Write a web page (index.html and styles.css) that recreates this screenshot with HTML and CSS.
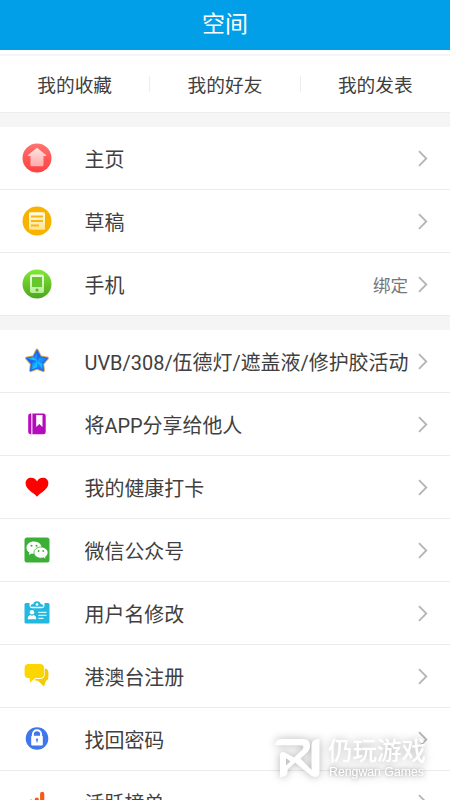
FILE: index.html
```html
<!DOCTYPE html>
<html lang="zh-CN">
<head>
<meta charset="utf-8">
<title>空间</title>
<link rel="stylesheet" href="styles.css">
</head>
<body>
<div class="screen">
  <header class="header">空间</header>
  <nav class="tabs">
    <a class="tab">我的收藏</a>
    <a class="tab">我的好友</a>
    <a class="tab">我的发表</a>
  </nav>
  <section class="group">
    <div class="row">
      <svg class="icon" viewBox="0 0 30 30"><defs><linearGradient id="red" x2="0" y2="1"><stop stop-color="#ff7470"/><stop offset="1" stop-color="#ff3f40"/></linearGradient><linearGradient id="house" x2="0" y2="1"><stop stop-color="#ffe4e2"/><stop offset="1" stop-color="#ffaaa9"/></linearGradient></defs><circle cx="15" cy="15" r="14.5" fill="url(#red)"/><path d="M15 4.7 24.3 12.3Q24.7 13.1 23.8 13.1H21.5V22.2Q21.5 23.2 20.5 23.2H9.5Q8.5 23.2 8.5 22.2V13.1H6.2Q5.3 13.1 5.7 12.3Z" fill="url(#house)"/></svg>
      <span class="label">主页</span><svg class="arrow" viewBox="0 0 10 17"><path d="M1 1.2 8.3 8.5 1 15.8"/></svg>
    </div>
    <div class="row">
      <svg class="icon" viewBox="0 0 30 30"><defs><linearGradient id="paper" x2="0" y2="1"><stop stop-color="#fffbea"/><stop offset="1" stop-color="#ffe58d"/></linearGradient></defs><circle cx="15" cy="15" r="14.5" fill="#f8b300"/><rect x="7" y="6.2" width="16" height="17.5" rx="1.5" fill="url(#paper)"/><path d="M9 10.5H21M9 15H21M9 19.5H17" stroke="#f6b817" stroke-width="2"/></svg>
      <span class="label">草稿</span><svg class="arrow" viewBox="0 0 10 17"><path d="M1 1.2 8.3 8.5 1 15.8"/></svg>
    </div>
    <div class="row">
      <svg class="icon" viewBox="0 0 30 30"><defs><linearGradient id="green" x2="0" y2="1"><stop stop-color="#83e837"/><stop offset="1" stop-color="#4da51f"/></linearGradient><linearGradient id="phone" x2="0" y2="1"><stop stop-color="#edffe0"/><stop offset="1" stop-color="#b5ef8e"/></linearGradient></defs><circle cx="15" cy="15" r="14.5" fill="url(#green)"/><rect x="8" y="5.5" width="14" height="18.5" rx="2" fill="url(#phone)"/><path d="M10 8H20V18H10Z" fill="#65c72c"/><circle cx="15" cy="21" r="1.5" fill="#58b524"/></svg>
      <span class="label">手机</span><span class="value">绑定</span><svg class="arrow" viewBox="0 0 10 17"><path d="M1 1.2 8.3 8.5 1 15.8"/></svg>
    </div>
  </section>
  <section class="group">
    <div class="row">
      <svg class="icon" viewBox="0 0 30 30"><defs><linearGradient id="star" x2="1" y2="1"><stop stop-color="#1b62ed"/><stop offset=".5" stop-color="#199cff"/><stop offset="1" stop-color="#1764ef"/></linearGradient></defs><path d="M15 4.3 18.3 11 25.3 12.2 20.5 17.8 21.3 24.5 15 22.1 8.7 24.5 9.5 17.8 4.7 12.2 11.7 11Z" fill="url(#star)" stroke="#e5b460" stroke-width="3.4" stroke-linejoin="round"/><path d="M15 4.3 18.3 11 25.3 12.2 20.5 17.8 21.3 24.5 15 22.1 8.7 24.5 9.5 17.8 4.7 12.2 11.7 11Z" fill="url(#star)" stroke="#246cf0" stroke-width="1.6" stroke-linejoin="round"/><path d="M15 15 11.7 11 6 12.8ZM15 15 20.5 17.8 20.2 23.5ZM15 15V21.5L9.8 23.3Z" fill="#12cfff" opacity=".75"/><path d="M15 15V5.2L18.3 11ZM15 15 9.5 17.8 6 13Z" fill="#2245e5" opacity=".5"/></svg>
      <span class="label">UVB/308/伍德灯/遮盖液/修护胶活动</span><svg class="arrow" viewBox="0 0 10 17"><path d="M1 1.2 8.3 8.5 1 15.8"/></svg>
    </div>
    <div class="row">
      <svg class="icon" viewBox="0 0 30 30"><path d="M8.2 4.5H9.3V25.2H8.2Q6.2 25 6.2 22.8V7Q6.2 4.7 8.2 4.5ZM10.4 4.5H21.5Q23.7 4.5 23.7 6.7V23Q23.7 25.2 21.5 25.2H10.4Z" fill="#b60bbd"/><path d="M14.2 6H20.5V18L17.3 15 14.2 18Z" fill="#fff"/></svg>
      <span class="label">将APP分享给他人</span><svg class="arrow" viewBox="0 0 10 17"><path d="M1 1.2 8.3 8.5 1 15.8"/></svg>
    </div>
    <div class="row">
      <svg class="icon" viewBox="0 0 30 30"><path d="M15 24.8C12 20.8 3.6 17.8 3.6 11.3 3.6 7.7 6.1 5.7 9.1 5.7 11.8 5.7 14.2 7.3 15 9.5 15.8 7.3 18.2 5.7 20.9 5.7 23.9 5.7 26.4 7.7 26.4 11.3 26.4 17.8 18 20.8 15 24.8Z" fill="#fe0000"/></svg>
      <span class="label">我的健康打卡</span><svg class="arrow" viewBox="0 0 10 17"><path d="M1 1.2 8.3 8.5 1 15.8"/></svg>
    </div>
    <div class="row">
      <svg class="icon" viewBox="0 0 30 30"><rect x="2.5" y="2.5" width="25" height="25" rx="2.5" fill="#3caf36"/><path d="M12 6.5C7.7 6.5 4.5 9.2 4.5 12.7 4.5 14.8 5.7 16.5 7.5 17.6L6.8 20 9.7 18.5Q11 18.9 12.4 18.8C16.5 18.8 19.6 16 19.6 12.7S16.2 6.5 12 6.5Z" fill="#fff"/><path d="M18.8 12C15 12 12 14.5 12 17.6S15 23.2 18.8 23.2Q20.2 23.2 21.4 22.8L24.1 24.1 23.5 21.9C25 20.9 26 19.4 26 17.6 26 14.5 22.7 12 18.8 12Z" fill="#fff" stroke="#3caf36" stroke-width=".8"/><g fill="#3caf36"><circle cx="9.5" cy="10.8" r="1"/><circle cx="14.5" cy="10.8" r="1"/><circle cx="16.6" cy="16" r=".9"/><circle cx="21.2" cy="16" r=".9"/></g></svg>
      <span class="label">微信公众号</span><svg class="arrow" viewBox="0 0 10 17"><path d="M1 1.2 8.3 8.5 1 15.8"/></svg>
    </div>
    <div class="row">
      <svg class="icon" viewBox="0 0 30 30"><path d="M4 5H26Q27.500 5 27.500 6.500V24Q27.500 25.500 26 25.500H4Q2.500 25.500 2.500 24V6.500Q2.500 5 4 5Z" fill="#22b8df"/><path d="M7.500 4.500V7Q7.500 10.200 10.500 10.200H19.500Q22.500 10.200 22.500 7V4.500Z" fill="#fff"/><path d="M8.500 8.700Q8.500 6.200 11.300 5.900 11.900 3.300 15 3.300T18.700 5.900Q21.500 6.200 21.500 8.700Z" fill="#22b8df"/><circle cx="15" cy="6.400" r="1.300" fill="#fff"/><circle cx="10" cy="14.300" r="2.300" fill="#fff"/><path d="M5.800 21.200Q5.600 17.500 8.700 17L10 17.900 11.300 17Q14.400 17.500 14.200 21.200Z" fill="#fff"/><path d="M16.300 14.300H24.500M16.300 17.300H24.500M16.300 20.300H21.500" stroke="#d7f5fc" stroke-width="1.300"/></svg>
      <span class="label">用户名修改</span><svg class="arrow" viewBox="0 0 10 17"><path d="M1 1.2 8.3 8.5 1 15.8"/></svg>
    </div>
    <div class="row">
      <svg class="icon" viewBox="0 0 30 30"><path d="M22.7 7.4Q26.4 7.7 26.4 11.4V15.4Q26.4 19.2 24 19.6L22 25.5 16 19.7 11.8 19.2 14 17.9H18Q22.5 17.9 22.7 13.7Z" fill="#f4ca00"/><path d="M6.6 3H18Q22 3 22 7V13Q22 17 18 17H13.2L8 21.7 7.7 17H6.6Q2.6 17 2.6 13V7Q2.6 3 6.6 3Z" fill="#fdd500"/></svg>
      <span class="label">港澳台注册</span><svg class="arrow" viewBox="0 0 10 17"><path d="M1 1.2 8.3 8.5 1 15.8"/></svg>
    </div>
    <div class="row">
      <svg class="icon" viewBox="0 0 30 30"><circle cx="15" cy="14.500" r="11.3" fill="#3f76ec"/><path d="M10.9 12.500V10.300a4.1 4.1 0 0 1 8.2 0V12.500" fill="none" stroke="#fff" stroke-width="2"/><rect x="9.2" y="11.7" width="11.6" height="9.8" rx="1" fill="#fff"/><circle cx="15" cy="15.7" r="1.1" fill="#3f76ec"/><path d="M14.5 15.500H15.5V18.500H14.5Z" fill="#3f76ec"/></svg>
      <span class="label">找回密码</span><svg class="arrow" viewBox="0 0 10 17"><path d="M1 1.2 8.3 8.5 1 15.8"/></svg>
    </div>
    <div class="row">
      <svg class="icon" viewBox="0 0 30 30"><path d="M9.1 14.7V26M14.8 12.500V26M20.2 6.800V26" stroke="#f75a14" stroke-width="4.2" stroke-linecap="round"/></svg>
      <span class="label">活跃榜单</span><svg class="arrow" viewBox="0 0 10 17"><path d="M1 1.2 8.3 8.5 1 15.8"/></svg>
    </div>
  </section>
  <div class="watermark">
    <svg class="mark" viewBox="0 0 47 42"><path fill-rule="evenodd" d="M1 8.3Q1.500 2 7.500 2H29Q36 2 36 9 36 13 32.500 16L26.500 21.500 37.500 33V8Q37.500 2 45.500 2V35Q45.500 40 41 40 38 40 35 37L21 25.500 13.500 32.500V35Q13.500 40 6 40V17.500Q7 14 11 15.500L20 20.500 28.500 12.500Q31 8.500 27 8.300ZM12 21V28.500L16.500 24.500Z" fill="#fff"/></svg>
    <div class="brand"><span class="brand-cn">仍玩游戏</span><span class="brand-en">Rengwan Games</span></div>
  </div>
</div>
</body>
</html>
```
FILE: styles.css
```css
* { box-sizing: border-box; }
body { margin: 0; }
.screen {
  position: relative;
  width: 450px;
  height: 800px;
  overflow: hidden;
  background: #f5f5f5;
  color: #404040;
  font-family: Roboto, "Noto Sans CJK SC", sans-serif;
}
.header {
  height: 50px;
  background: #029fe9;
  color: #fff;
  font-size: 23px;
  line-height: 50px;
  text-align: center;
}
.tabs {
  display: flex;
  align-items: center;
  height: 63px;
  padding-top: 5px;
  background: linear-gradient(#fff 4px, #f5f5f5 4px, #f5f5f5 6px, #fff 6px);
  border-bottom: 1px solid #ececec;
}
.tab {
  flex: 1;
  height: 16px;
  font-size: 18.7px;
  line-height: 20px;
  text-align: center;
}
.tab + .tab { border-left: 1px solid #ededed; }
.group { margin-top: 14px; background: #fff; }
.row {
  display: flex;
  align-items: center;
  height: 63px;
  padding: 0 22px;
  border-bottom: 1px solid #ebebeb;
}
.icon { flex: none; width: 30px; height: 30px; }
.label {
  flex: 1;
  margin-left: 32.5px;
  padding-top: 4px;
  font-size: 19.95px;
  line-height: 30px;
  white-space: nowrap;
}
.value { margin-right: 10px; color: #777; font-size: 17.5px; }
.arrow { flex: none; width: 10px; height: 17px; }
.arrow path { fill: none; stroke: #b5b5b5; stroke-width: 1.8; }
.watermark {
  position: absolute;
  left: 274px;
  top: 737px;
  display: flex;
  gap: 7px;
  color: #fff;
  filter: drop-shadow(0 0 4px rgba(0, 0, 0, .3));
}
.mark { width: 47px; height: 42px; }
.brand { display: flex; flex-direction: column; }
.brand-cn { font-size: 24.5px; font-weight: 500; line-height: 29px; }
.brand-en {
  margin-left: 1px;
  font-family: "Liberation Sans", sans-serif;
  font-size: 12.3px;
  line-height: 13px;
  text-shadow: 0 0 4px rgba(0, 0, 0, .35);
}
```
